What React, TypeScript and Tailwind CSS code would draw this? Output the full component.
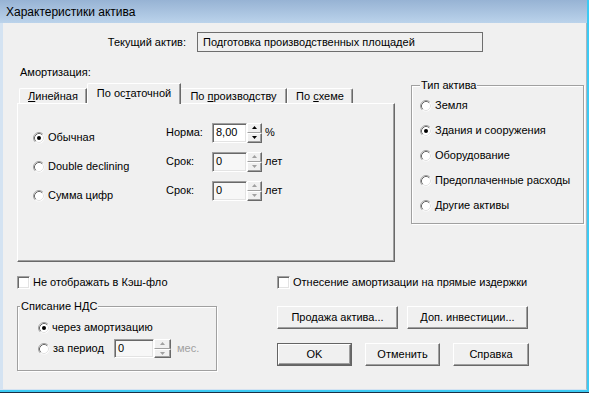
import React from "react";

function Radio({ checked }: { checked?: boolean }) {
  return (
    <svg width="12" height="12" viewBox="0 0 12 12" className="shrink-0">
      <circle cx="6" cy="6" r="5.5" fill="#ffffff" />
      <path d="M2.11 9.89 A5.5 5.5 0 0 1 9.89 2.11" fill="none" stroke="#a0a0a0" strokeWidth="1" />
      <path d="M2.82 9.18 A4.5 4.5 0 0 1 9.18 2.82" fill="none" stroke="#696969" strokeWidth="1" />
      <path d="M9.18 2.82 A4.5 4.5 0 0 1 2.82 9.18" fill="none" stroke="#e3e3e3" strokeWidth="1" />
      {checked && <circle cx="6" cy="6" r="2" fill="#000000" />}
    </svg>
  );
}

function Check() {
  return (
    <div className="w-[13px] h-[13px] shrink-0 bg-white border border-t-[#a0a0a0] border-l-[#a0a0a0] border-r-white border-b-white shadow-[inset_1px_1px_0_#696969,inset_-1px_-1px_0_#e3e3e3]" />
  );
}

function Arrow({ up, color }: { up?: boolean; color: string }) {
  return (
    <svg width="5" height="3" viewBox="0 0 5 3">
      {up ? <path d="M2.5 0 L5 3 L0 3 Z" fill={color} /> : <path d="M0 0 L5 0 L2.5 3 Z" fill={color} />}
    </svg>
  );
}

function Spinner({ disabled, wide }: { disabled?: boolean; wide?: boolean }) {
  const c = disabled ? "#a0a0a0" : "#000000";
  return (
    <div className={wide ? "w-[17px] h-[19px] flex flex-col shrink-0" : "w-[15px] h-[20px] flex flex-col shrink-0"}>
      <div className="flex-1 flex items-center justify-center bg-[#f0f0f0] border border-t-white border-l-white border-r-[#696969] border-b-[#a0a0a0] shadow-[inset_-1px_0_0_#a0a0a0]">
        <Arrow up color={c} />
      </div>
      <div className="flex-1 flex items-center justify-center bg-[#f0f0f0] border border-t-white border-l-white border-r-[#696969] border-b-[#696969] shadow-[inset_-1px_-1px_0_#a0a0a0]">
        <Arrow color={c} />
      </div>
    </div>
  );
}

function Field({ value, disabled }: { value: string; disabled?: boolean }) {
  return (
    <div
      className={
        disabled
          ? "w-[35px] h-[20px] shrink-0 flex items-center pl-[3px] bg-[#f7f7f7] border border-t-[#a0a0a0] border-l-[#a0a0a0] border-r-white border-b-white shadow-[inset_1px_1px_0_#696969,inset_-1px_-1px_0_#e3e3e3]"
          : "w-[35px] h-[20px] shrink-0 flex items-center pl-[3px] bg-white border border-t-[#a0a0a0] border-l-[#a0a0a0] border-r-white border-b-white shadow-[inset_1px_1px_0_#696969,inset_-1px_-1px_0_#e3e3e3]"
      }
    >
      {value}
    </div>
  );
}

function Btn({ children, className }: { children: React.ReactNode; className: string }) {
  return (
    <div className={"h-[23px] flex items-center justify-center bg-[#f0f0f0] border border-t-white border-l-white border-r-[#696969] border-b-[#696969] shadow-[inset_-1px_-1px_0_#a0a0a0] " + className}>
      {children}
    </div>
  );
}

export default function App() {
  return (
    <div className="font-['Liberation_Sans',Arial,sans-serif] text-[11px] leading-[13px] text-black w-[589px] h-[393px] flex flex-col bg-[#1a2f45]">
      <div className="flex flex-col flex-1 mb-[1px] border-r-[2px] border-b-[2px] border-[#3ccaf3]">
        {/* title bar */}
        <div className="h-[23px] shrink-0 bg-gradient-to-b from-[#97b3d4] to-[#bbd3eb] flex items-center pl-[6px] text-[12px] leading-[14px]">
          Характеристики актива
        </div>
        {/* body */}
        <div className="flex-1 bg-[#f0f0f0] border-l-[3px] border-l-[#d4e3f2] border-r border-r-[#a8b4c0] border-b border-b-[#d4e3f2] flex flex-col">
          {/* current asset */}
          <div className="mt-[9px] h-[20px] flex items-center">
            <div className="w-[183px] text-right">Текущий актив:</div>
            <div className="ml-[11px] w-[286px] h-[20px] flex items-center pl-[5px] border border-[#6e6e6e]">
              Подготовка производственных площадей
            </div>
          </div>

          <div className="mt-[14px] pl-[17px]">Амортизация:</div>

          {/* main row */}
          <div className="flex items-start">
            {/* tab control */}
            <div className="mt-[4px] ml-[14px] w-[378px] flex flex-col">
              <div className="flex items-end h-[20px] pl-[2px]">
                <div className="w-[68px] h-[15px] flex items-center justify-center rounded-tl-[2px] border-t border-l border-t-white border-l-white border-r border-r-[#696969] shadow-[inset_-1px_0_0_#a0a0a0]">
                  <span>
                    <span className="underline">Л</span>инейная
                  </span>
                </div>
                <div className="relative z-10 -mb-[1px] w-[94px] h-[21px] pb-[1px] flex items-center justify-center bg-[#f0f0f0] rounded-tl-[2px] border-t border-l border-t-white border-l-white border-r border-r-[#696969] shadow-[inset_-1px_0_0_#a0a0a0]">
                  <span>
                    По ос<span className="underline">т</span>аточной
                  </span>
                </div>
                <div className="w-[106px] h-[15px] flex items-center justify-center border-t border-t-white border-r border-r-[#696969] shadow-[inset_-1px_0_0_#a0a0a0]">
                  <span>
                    По <span className="underline">п</span>роизводству
                  </span>
                </div>
                <div className="w-[66px] h-[15px] flex items-center justify-center rounded-tr-[2px] border-t border-l border-t-white border-l-white border-r border-r-[#696969] shadow-[inset_-1px_0_0_#a0a0a0]">
                  <span>
                    По <span className="underline">с</span>хеме
                  </span>
                </div>
              </div>
              <div className="h-[159px] flex border border-t-white border-l-white border-r-[#696969] border-b-[#696969] shadow-[inset_-1px_-1px_0_#a0a0a0]">
                <div className="w-[148px] pl-[15px] mt-[19px] flex flex-col">
                  <div className="h-[29px] flex items-center gap-[3px]">
                    <Radio checked />
                    <span>Обычная</span>
                  </div>
                  <div className="h-[29px] flex items-center gap-[3px]">
                    <Radio />
                    <span>Double declining</span>
                  </div>
                  <div className="h-[29px] flex items-center gap-[3px]">
                    <Radio />
                    <span>Сумма цифр</span>
                  </div>
                </div>
                <div className="mt-[14px] flex flex-col">
                  <div className="h-[29px] flex items-center">
                    <span className="w-[46px]">Норма:</span>
                    <Field value="8,00" />
                    <Spinner />
                    <span className="ml-[3px]">%</span>
                  </div>
                  <div className="h-[29px] flex items-center">
                    <span className="w-[46px]">Срок:</span>
                    <Field value="0" disabled />
                    <Spinner disabled />
                    <span className="ml-[3px]">лет</span>
                  </div>
                  <div className="h-[29px] flex items-center">
                    <span className="w-[46px]">Срок:</span>
                    <Field value="0" disabled />
                    <Spinner disabled />
                    <span className="ml-[3px]">лет</span>
                  </div>
                </div>
              </div>
            </div>

            {/* asset type */}
            <fieldset className="ml-[16px] w-[173px] h-[145px] border border-[#a0a0a0] shadow-[inset_1px_1px_0_#ffffff,1px_1px_0_#ffffff]">
              <legend className="ml-[8px] px-[1px] bg-[#f0f0f0]">Тип актива</legend>
              <div className="pt-[1px] pl-[8px] flex flex-col">
                <div className="h-[25px] flex items-center gap-[3px]">
                  <Radio />
                  <span>Земля</span>
                </div>
                <div className="h-[25px] flex items-center gap-[3px]">
                  <Radio checked />
                  <span>Здания и сооружения</span>
                </div>
                <div className="h-[25px] flex items-center gap-[3px]">
                  <Radio />
                  <span>Оборудование</span>
                </div>
                <div className="h-[25px] flex items-center gap-[3px]">
                  <Radio />
                  <span>Предоплаченные расходы</span>
                </div>
                <div className="h-[25px] flex items-center gap-[3px]">
                  <Radio />
                  <span>Другие активы</span>
                </div>
              </div>
            </fieldset>
          </div>

          {/* bottom */}
          <div className="mt-[14px] flex items-start">
            <div className="ml-[14px] w-[200px] flex flex-col">
              <div className="h-[13px] flex items-center gap-[3px]">
                <Check />
                <span>Не отображать в Кэш-фло</span>
              </div>
              <fieldset className="mt-[11px] h-[71px] border border-[#a0a0a0] shadow-[inset_1px_1px_0_#ffffff,1px_1px_0_#ffffff]">
                <legend className="ml-[2px] px-[1px] bg-[#f0f0f0]">Списание НДС</legend>
                <div className="pt-[4px] pl-[20px] flex flex-col">
                  <div className="h-[21px] flex items-center gap-[2px]">
                    <Radio checked />
                    <span>через амортизацию</span>
                  </div>
                  <div className="h-[21px] flex items-center">
                    <Radio />
                    <span className="ml-[3px] w-[61px]">за период</span>
                    <div className="w-[40px] h-[19px] flex items-center pl-[3px] bg-[#f7f7f7] border border-t-[#a0a0a0] border-l-[#a0a0a0] border-r-white border-b-white shadow-[inset_1px_1px_0_#696969,inset_-1px_-1px_0_#e3e3e3]">
                      0
                    </div>
                    <Spinner disabled wide />
                    <span className="ml-[6px] text-[#a0a0a0]">мес.</span>
                  </div>
                </div>
              </fieldset>
            </div>

            <div className="ml-[60px] flex flex-col">
              <div className="h-[13px] flex items-center gap-[3px]">
                <Check />
                <span>Отнесение амортизации на прямые издержки</span>
              </div>
              <div className="mt-[17px] flex gap-[9px]">
                <Btn className="w-[121px]">Продажа актива...</Btn>
                <Btn className="w-[121px]">Доп. инвестиции...</Btn>
              </div>
              <div className="mt-[14px] flex gap-[13px]">
                <div className="w-[75px] h-[23px] border border-[#646464] flex">
                  <div className="flex-1 flex items-center justify-center bg-[#f0f0f0] border border-t-white border-l-white border-r-[#696969] border-b-[#696969] shadow-[inset_-1px_-1px_0_#a0a0a0]">
                    OK
                  </div>
                </div>
                <Btn className="w-[75px]">Отменить</Btn>
                <Btn className="w-[76px]">Справка</Btn>
              </div>
            </div>
          </div>
        </div>
      </div>
    </div>
  );
}
